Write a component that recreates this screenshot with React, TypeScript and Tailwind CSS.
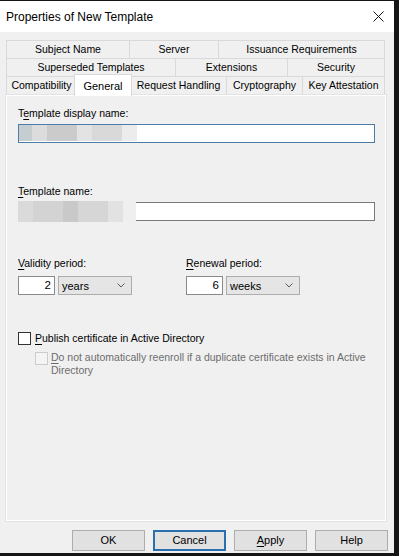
import React from "react";

function U({ children }: { children: React.ReactNode }) {
  return <span className="underline underline-offset-[1.5px] decoration-[1px]">{children}</span>;
}

function Chevron() {
  return (
    <svg width="8" height="5" viewBox="0 0 8 5" className="shrink-0">
      <path d="M0.5 0.5 L4 4 L7.5 0.5" fill="none" stroke="#5a5a5a" strokeWidth="1" />
    </svg>
  );
}

function PeriodGroup({
  label,
  value,
  unit,
  wide,
}: {
  label: React.ReactNode;
  value: string;
  unit: string;
  wide: boolean;
}) {
  return (
    <div className={wide ? "flex flex-col w-[168px]" : "flex flex-col"}>
      <div className="h-[13px] leading-[13px]">{label}</div>
      <div className="flex mt-[6px] h-[19px]">
        <div className="w-[37px] h-[19px] bg-white border border-[#8a8a8a] flex items-center justify-end pr-[3px] text-[11.5px]">
          {value}
        </div>
        <div className="ml-[3px] w-[74px] h-[19px] bg-[#e5e5e5] border border-[#adadad] flex items-center justify-between pl-[3px] pr-[6px] text-[11px]">
          <span className="pt-[2px]">{unit}</span>
          <Chevron />
        </div>
      </div>
    </div>
  );
}

export default function App() {
  const row1 = [
    { t: "Subject Name", c: "w-[123px] border-l border-t" },
    { t: "Server", c: "w-[89px] border-l border-t" },
    { t: "Issuance Requirements", c: "w-[167px] border-l border-t border-r" },
  ];
  const row2 = [
    { t: "Superseded Templates", c: "w-[169px] border-l border-t" },
    { t: "Extensions", c: "w-[112px] border-l border-t" },
    { t: "Security", c: "w-[98px] border-l border-t border-r" },
  ];

  return (
    <div className="w-[399px] h-[556px] bg-[#151515] pt-[1px] pr-[5px] pb-[3px] font-['Liberation_Sans',Arial,sans-serif] text-[10.5px] text-black">
      <div className="w-[394px] h-[552px] flex flex-col bg-[#f0f0f0]">
        {/* title bar */}
        <div className="h-[31px] bg-white flex items-center justify-between pl-[6px] pr-[8px] shrink-0">
          <span className="text-[12px] leading-[14px] pt-[1px]">Properties of New Template</span>
          <svg width="11" height="11" viewBox="0 0 11 11" className="mr-[2px]">
            <path d="M0.5 0.5 L10.5 10.5 M10.5 0.5 L0.5 10.5" stroke="#111" strokeWidth="1" />
          </svg>
        </div>

        {/* tabs */}
        <div className="pt-[8px] pl-[6px] flex flex-col shrink-0">
          <div className="flex h-[18px]">
            {row1.map((r) => (
              <div key={r.t} className={`${r.c} border-[#d9d9d9] h-[18px] flex items-center justify-center`}>
                {r.t}
              </div>
            ))}
          </div>
          <div className="flex h-[18px]">
            {row2.map((r) => (
              <div key={r.t} className={`${r.c} border-[#d9d9d9] h-[18px] flex items-center justify-center`}>
                {r.t}
              </div>
            ))}
          </div>
          <div className="flex h-[19px] items-end">
            <div className="w-[70px] h-[19px] border-l border-t border-[#d9d9d9] flex items-center justify-center">
              Compatibility
            </div>
            <div className="relative z-10 -mx-[2px] -mb-[1px] w-[58px] h-[22px] bg-white border-l border-t border-r border-[#d9d9d9] flex items-start justify-center pt-[3px] text-[11px]">
              General
            </div>
            <div className="w-[96px] h-[19px] border-l border-t border-[#d9d9d9] flex items-center justify-center">
              Request Handling
            </div>
            <div className="w-[76px] h-[19px] border-l border-t border-[#d9d9d9] flex items-center justify-center">
              Cryptography
            </div>
            <div className="w-[83px] h-[19px] border-l border-t border-r border-[#d9d9d9] flex items-center justify-center">
              Key Attestation
            </div>
          </div>
        </div>

        {/* panel */}
        <div className="ml-[6px] w-[380px] h-[426px] shrink-0 border border-white shadow-[0_0_0_1px_#e3e3e3] bg-[#f0f0f0] flex flex-col pl-[11px] pr-[10px] pt-[11px]">
          <div className="h-[13px] leading-[13px]">
            T<U>e</U>mplate display name:
          </div>
          <div className="mt-[4px] h-[19px] w-[357px] bg-white border border-[#4a7ea8] flex items-stretch">
            <div className="flex h-[16px]">
              <div className="w-[13px] bg-[#c5cdd1]" />
              <div className="w-[15px] bg-[#dcdcdc]" />
              <div className="w-[30px] bg-[#cbcbcb]" />
              <div className="w-[15px] bg-[#e3e3e3]" />
              <div className="w-[30px] bg-[#d9d9d9]" />
              <div className="w-[15px] bg-[#ececec]" />
            </div>
          </div>

          <div className="mt-[42px] h-[13px] leading-[13px]">
            <U>T</U>emplate name:
          </div>
          <div className="mt-[4px] h-[19px] w-[357px] bg-white border border-[#7a7a7a] flex items-stretch">
            <div className="flex -ml-px -mt-[2px] h-[21px]">
              <div className="w-[15px] bg-[#dadada]" />
              <div className="w-[30px] bg-[#d3d3d3]" />
              <div className="w-[15px] bg-[#c9c9c9]" />
              <div className="w-[30px] bg-[#d6d6d6]" />
              <div className="w-[15px] bg-[#e2e2e2]" />
              <div className="w-[13px] bg-[#efefef]" />
            </div>
          </div>

          <div className="mt-[36px] flex">
            <PeriodGroup
              wide
              label={
                <>
                  <U>V</U>alidity period:
                </>
              }
              value="2"
              unit="years"
            />
            <PeriodGroup
              wide={false}
              label={
                <>
                  <U>R</U>enewal period:
                </>
              }
              value="6"
              unit="weeks"
            />
          </div>

          <div className="mt-[37px] flex items-center h-[13px]">
            <div className="w-[13px] h-[13px] bg-white border border-[#333]" />
            <span className="ml-[4px] leading-[13px]">
              <U>P</U>ublish certificate in Active Directory
            </span>
          </div>

          <div className="mt-[6px] flex items-start ml-[17px]">
            <div className="mt-[1px] w-[13px] h-[13px] bg-[#f4f4f4] border border-[#cccccc]" />
            <div className="ml-[3px] leading-[13px] text-[#6d6d6d] whitespace-nowrap">
              <div>
                <U>D</U>o not automatically reenroll if a duplicate certificate exists in Active
              </div>
              <div>Directory</div>
            </div>
          </div>
        </div>

        {/* buttons */}
        <div className="mt-[9px] h-[21px] flex justify-end gap-[8px] pr-[6px] shrink-0 text-[11px]">
          <div className="w-[73px] h-[21px] bg-[#e1e1e1] border border-[#adadad] flex items-center justify-center">OK</div>
          <div className="w-[73px] h-[21px] bg-[#e1e1e1] border-2 border-[#2b6fae] flex items-center justify-center">
            Cancel
          </div>
          <div className="w-[73px] h-[21px] bg-[#e1e1e1] border border-[#adadad] flex items-center justify-center">
            <span>
              <U>A</U>pply
            </span>
          </div>
          <div className="w-[73px] h-[21px] bg-[#e1e1e1] border border-[#adadad] flex items-center justify-center">Help</div>
        </div>
      </div>
    </div>
  );
}
